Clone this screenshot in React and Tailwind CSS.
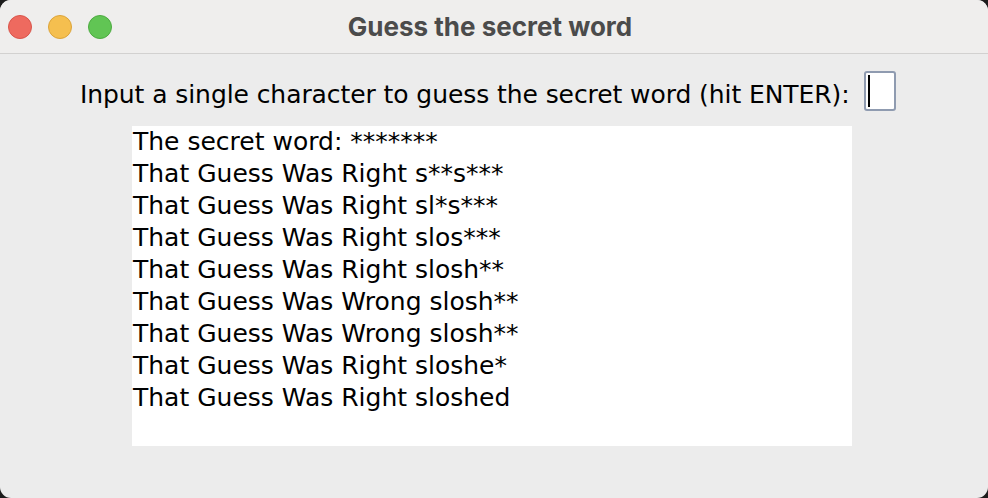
export default function App() {
  const lines = [
    "The secret word: *******",
    "That Guess Was Right s**s***",
    "That Guess Was Right sl*s***",
    "That Guess Was Right slos***",
    "That Guess Was Right slosh**",
    "That Guess Was Wrong slosh**",
    "That Guess Was Wrong slosh**",
    "That Guess Was Right sloshe*",
    "That Guess Was Right sloshed",
  ];
  return (
    <div className="w-[988px] h-[498px] bg-[#1c1c1c] overflow-hidden">
      <div className="w-full h-full rounded-[11px] overflow-hidden bg-[#ececec] flex flex-col">
        <div className="h-[54px] shrink-0 bg-[#efeeed] border-b border-[#d2d1d0] flex items-center relative">
          <div className="flex items-center gap-[16px] pl-[8px] pt-[1px]">
            <div className="w-[24px] h-[24px] rounded-full bg-[#ee6a5f] border border-[#d9554b]" />
            <div className="w-[24px] h-[24px] rounded-full bg-[#f5bf4f] border border-[#dca43a]" />
            <div className="w-[24px] h-[24px] rounded-full bg-[#61c554] border border-[#4dab41]" />
          </div>
          <div
            className="absolute left-0 right-0 top-0 h-[52px] flex items-center justify-center text-[26px] font-bold text-[#4b4b4b] pr-[8px]"
            style={{ fontFamily: "Inter, 'Noto Sans', sans-serif" }}
          >
            Guess the secret word
          </div>
        </div>
        <div
          className="flex flex-col text-black text-[25px]"
          style={{ fontFamily: "'DejaVu Sans', Verdana, sans-serif" }}
        >
          <div className="flex items-start pl-[80px] gap-[14px] mt-[17px] h-[40px]">
            <span className="leading-[40px] pt-[4px] tracking-[-0.08px]">
              Input a single character to guess the secret word (hit ENTER):
            </span>
            <div className="w-[32px] h-[40px] rounded-[3px] border-2 border-[#8f9bb0] bg-white flex items-center pl-[2px]">
              <div className="w-[2px] h-[32px] bg-black" />
            </div>
          </div>
          <div className="ml-[132px] mt-[15px] w-[720px] h-[320px] bg-white pl-[1px]">
            {lines.map((l, i) => (
              <div key={i} className="leading-[32px] h-[32px] whitespace-pre">
                {l}
              </div>
            ))}
          </div>
        </div>
      </div>
    </div>
  );
}
